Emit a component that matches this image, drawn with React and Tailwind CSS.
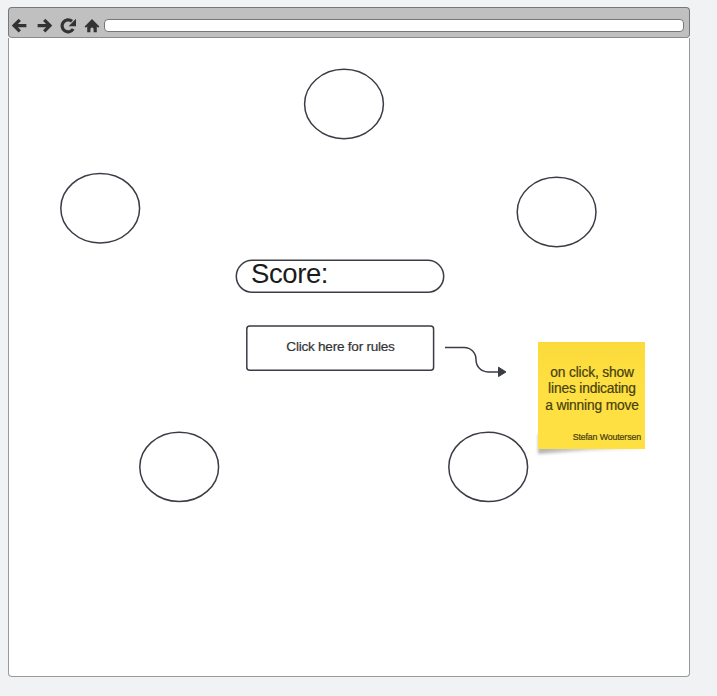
const circles = [
  { cx: 335, cy: 66 },
  { cx: 91.2, cy: 170.2 },
  { cx: 547.6, cy: 174 },
  { cx: 170.2, cy: 428.9 },
  { cx: 479.2, cy: 428.9 },
];

function Circles() {
  return (
    <svg className="absolute inset-0 h-full w-full" fill="none">
      {circles.map((c) => (
        <ellipse key={c.cx} cx={c.cx} cy={c.cy} rx="39.4" ry="34.7" stroke="#3a3d45" strokeWidth="1.5" />
      ))}
    </svg>
  );
}

function BrowserBar() {
  return (
    <header className="flex h-[31px] shrink-0 items-center rounded-[4px] border border-[#777] border-b-[#8a8a8a] bg-[#c0c0c0] pr-[5px] pl-[3px] pt-[6px]">
      <svg className="mr-[2px] shrink-0" width="90" height="18" fill="none" stroke="#333" strokeWidth="3.2">
        <path d="M14.4 8.6H2.5M7.8 2.8L2 8.6L7.8 14.4" />
        <path d="M25.6 8.6H37.5M32.2 2.8L38 8.6L32.2 14.4" />
        <path d="M61.2 12A6 6 0 1 1 60 4.3" />
        <path d="M64 1.8V9.2H56.6Z" fill="#333" stroke="none" />
        <path d="M72.6 9.4L80 2L87.4 9.4L86.2 10.8L84.8 9.6V15.2H81.6V12.2A1.6 1.6 0 0 0 78.4 12.2V15.2H75.2V9.6L73.8 10.8Z" fill="#333" stroke="none" />
      </svg>
      <div className="h-[13px] flex-1 rounded-[4px] border border-[#777] bg-white" />
    </header>
  );
}

function Score() {
  return (
    <div className="absolute top-[221px] left-[226px] h-[35px] w-[210px]">
      <svg className="absolute inset-0" width="210" height="35" fill="none">
        <rect x="1.3" y="1.3" width="207.4" height="32" rx="16" stroke="#3a3d45" strokeWidth="1.5" />
      </svg>
      <span className="relative block pl-[16px] text-[27.5px] leading-[30px] tracking-[-0.4px] text-[#1b1b1b]">
        Score:
      </span>
    </div>
  );
}

function RulesButton() {
  return (
    <button className="absolute top-[287px] left-[237px] flex h-[46px] w-[189px] items-center justify-center text-[13.6px] tracking-[-0.25px] text-[#333] [-webkit-text-stroke:0.2px_#333]">
      <svg className="absolute inset-0" width="189" height="46" fill="none">
        <rect x="0.8" y="1" width="186.8" height="44.2" rx="3" stroke="#3a3d45" strokeWidth="1.5" />
      </svg>
      <span className="pb-[2px] leading-[16px]">Click here for rules</span>
    </button>
  );
}

function StickyNote() {
  return (
    <div className="absolute top-[304px] left-[529px] h-[107px] w-[107px]">
      <svg className="absolute -left-2 top-[90px] overflow-visible" width="120" height="30">
        <defs>
          <filter id="soft" x="-20%" y="-50%" width="140%" height="200%">
            <feGaussianBlur stdDeviation="1.8" />
          </filter>
          <linearGradient id="fade">
            <stop offset="0" stopColor="#777" stopOpacity=".55" />
            <stop offset="1" stopColor="#777" stopOpacity=".08" />
          </linearGradient>
        </defs>
        <path d="M8 2H112V17L60 18.5L8 22Z" fill="url(#fade)" filter="url(#soft)" />
      </svg>
      <div className="relative flex h-full flex-col bg-linear-to-b from-[#fbdb3b] to-[#ffe042] to-45% pt-[23px] text-[#46400f]">
        <p className="pl-px text-center text-[13.8px] leading-[16.3px] tracking-[-0.17px] [-webkit-text-stroke:0.2px_#46400f]">
          on click, show
          <br />
          lines indicating
          <br />
          a winning move
        </p>
        <p className="mt-auto pr-[4px] pb-[6px] text-right text-[8.8px] leading-[12px] tracking-[-0.12px] [-webkit-text-stroke:0.2px_#46400f]">
          Stefan Woutersen
        </p>
      </div>
    </div>
  );
}

export default function App() {
  return (
    <div className="h-[696px] w-[717px] overflow-hidden bg-[#f1f2f4] pt-[7px] pl-[8px] font-['Liberation_Sans',Arial,sans-serif]">
      <div className="flex h-[670px] w-[682px] flex-col rounded-[5px] bg-white">
        <BrowserBar />
        <main className="relative flex-1 rounded-b-[4px] border border-t-0 border-[#999]">
          <Circles />
          <Score />
          <RulesButton />
          <svg className="absolute top-[304px] left-[435px]" width="64" height="36" fill="none">
            <path d="M1 5.5H20C27 5.5 32 11 32 17.5C32 24.5 37 29.9 44 29.9H54" stroke="#3a3d45" strokeWidth="1.5" />
            <path d="M54.5 25.2L62 29.9L54.5 34.6Z" fill="#3a3d45" stroke="#3a3d45" />
          </svg>
          <StickyNote />
        </main>
      </div>
    </div>
  );
}
